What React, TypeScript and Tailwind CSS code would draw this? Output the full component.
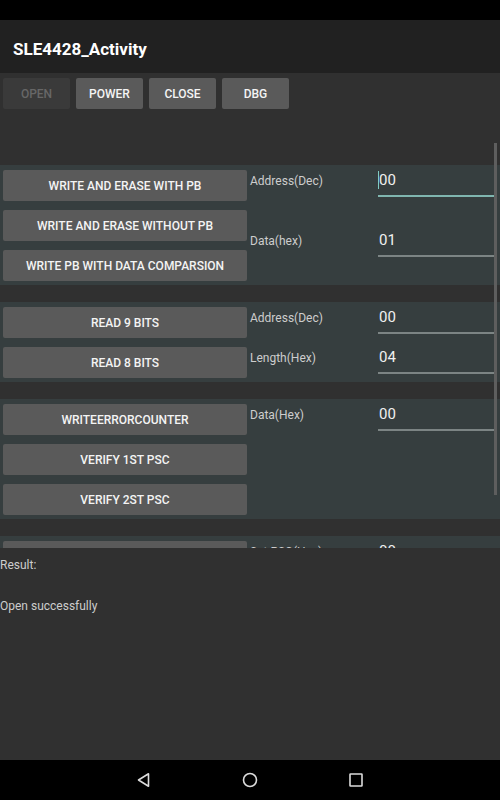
import React from 'react'

const font = "font-['Roboto','Liberation_Sans',sans-serif]"

function TopButton({ label, disabled }: { label: string; disabled?: boolean }) {
  return (
    <button
      type="button"
      className={
        disabled
          ? 'w-[67px] h-[31px] rounded-[2px] bg-[#3a3a3a] text-[#676767] text-[12px] font-medium uppercase'
          : 'w-[67px] h-[31px] rounded-[2px] bg-[#5a5a5a] text-[#f4f4f4] text-[12px] font-medium uppercase'
      }
    >
      {label}
    </button>
  )
}

function ActionButton({ label }: { label: string }) {
  return (
    <button
      type="button"
      className="w-[244px] h-[31px] shrink-0 rounded-[2px] bg-[#5a5a5a] text-[#f4f4f4] text-[12px] font-medium uppercase"
    >
      {label}
    </button>
  )
}

function Field({
  label,
  value,
  focused,
  className = '',
}: {
  label: string
  value: string
  focused?: boolean
  className?: string
}) {
  return (
    <div className={`flex h-[32px] shrink-0 ${className}`}>
      <div className="w-[128px] shrink-0 pt-[8px] text-[12px] leading-[16px] text-[#cdcdcd]">{label}</div>
      <div
        className={
          focused
            ? 'relative w-[119px] shrink-0 h-[32px] border-b-2 border-[#80b6b0] pt-[5px] text-[15px] leading-[20px] text-[#f0f0f0]'
            : 'relative w-[119px] shrink-0 h-[32px] border-b-2 border-[#7c8484] pt-[5px] text-[15px] leading-[20px] text-[#f0f0f0]'
        }
      >
        {focused && <span className="absolute left-0 top-[6px] w-px h-[18px] bg-[#80cbc4]" />}
        <span className="pl-px">{value}</span>
      </div>
    </div>
  )
}

function Section({
  buttons,
  children,
  className = '',
}: {
  buttons: string[]
  children: React.ReactNode
  className?: string
}) {
  return (
    <div className={`flex shrink-0 bg-[#363e3f] ${className}`}>
      <div className="flex flex-col gap-[9px] pl-[3px] pt-[5px] pb-[4px] w-[247px] shrink-0">
        {buttons.map((b) => (
          <ActionButton key={b} label={b} />
        ))}
      </div>
      <div className="flex flex-1 flex-col pl-[3px]">{children}</div>
    </div>
  )
}

export default function App() {
  return (
    <div className={`w-[500px] h-[800px] flex flex-col bg-[#303030] ${font}`}>
      {/* status bar */}
      <div className="h-[20px] bg-black shrink-0" />

      {/* app bar */}
      <div className="h-[53px] shrink-0 bg-[#212121] flex items-center px-[13px] pt-[6px]">
        <h1 className="text-[17px] font-bold text-white">SLE4428_Activity</h1>
      </div>

      {/* scrolling panel */}
      <div className="relative h-[475px] shrink-0 overflow-hidden">
        <div className="flex gap-[6px] pl-[3px] pt-[5px]">
          <TopButton label="Open" disabled />
          <TopButton label="Power" />
          <TopButton label="Close" />
          <TopButton label="DBG" />
        </div>

        <div className="flex flex-col mt-[56px]">
          <Section
            buttons={[
              'Write and erase with PB',
              'Write and erase without PB',
              'Write PB with data comparsion',
            ]}
          >
            <Field label="Address(Dec)" value="00" focused />
            <Field label="Data(hex)" value="01" className="mt-[28px]" />
          </Section>

          <Section buttons={['Read 9 bits', 'Read 8 bits']} className="mt-[17px]">
            <Field label="Address(Dec)" value="00" />
            <Field label="Length(Hex)" value="04" className="mt-[8px]" />
          </Section>

          <Section
            buttons={['Writeerrorcounter', 'Verify 1st PSC', 'Verify 2st PSC']}
            className="mt-[17px]"
          >
            <Field label="Data(Hex)" value="00" />
          </Section>

          <Section buttons={['Change PSC', 'Read PSC']} className="mt-[17px]">
            <Field label="Set PSC(Hex)" value="00" />
          </Section>
        </div>

        {/* scrollbar thumb */}
        <div className="absolute right-[3px] top-[70px] w-[3px] h-[352px] bg-[#5e5e5e]" />
      </div>

      {/* result area */}
      <div className="flex-1 pt-[9px] text-[12px] leading-[16px] text-[#cdcdcd]">
        <p>Result:</p>
        <p className="mt-[25px]">Open successfully</p>
      </div>

      {/* navigation bar */}
      <div className="h-[40px] shrink-0 bg-black flex items-center justify-center gap-[86px]">
        <svg width="20" height="20" viewBox="0 0 20 20" fill="none" stroke="#dcdcdc" strokeWidth="1.6" strokeLinejoin="round">
          <path d="M4.5 10 L14.5 3.8 L14.5 16.2 Z" />
        </svg>
        <svg width="20" height="20" viewBox="0 0 20 20" fill="none" stroke="#dcdcdc" strokeWidth="1.6">
          <circle cx="10" cy="10" r="6.5" />
        </svg>
        <svg width="20" height="20" viewBox="0 0 20 20" fill="none" stroke="#dcdcdc" strokeWidth="1.6">
          <rect x="4" y="4" width="12" height="12" rx="0.5" />
        </svg>
      </div>
    </div>
  )
}
